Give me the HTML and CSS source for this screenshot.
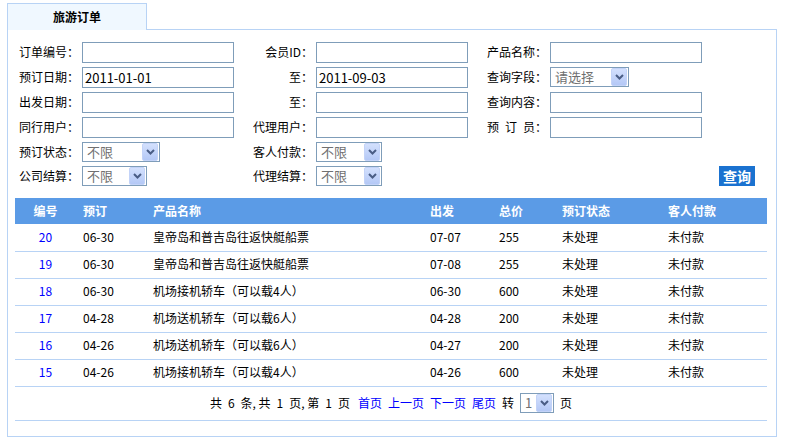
FILE: index.html
```html
<!DOCTYPE html>
<html lang="zh-CN">
<head>
<meta charset="utf-8">
<title>旅游订单</title>
<link rel="stylesheet" href="styles.css">
</head>
<body>
<div class="panel">
  <div class="tabs">
    <div class="tab">旅游订单</div>
    <div class="tab-fill"></div>
  </div>
  <div class="panel-body">
    <form class="search">
      <label class="lab lab1">订单编号：</label>
      <input class="inp" type="text">
      <label class="lab lab2">会员ID：</label>
      <input class="inp" type="text">
      <label class="lab lab3">产品名称：</label>
      <input class="inp" type="text">
      <span></span>

      <label class="lab lab1">预订日期：</label>
      <input class="inp" type="text" value="2011-01-01">
      <label class="lab lab2">至：</label>
      <input class="inp" type="text" value="2011-09-03">
      <label class="lab lab3">查询字段：</label>
      <div class="sel w79"><span class="sel-text">请选择</span><span class="sel-btn"><svg width="9" height="6" viewBox="0 0 9 6"><path d="M1 1 L4.5 4.5 L8 1" fill="none" stroke="#4a5d85" stroke-width="2"/></svg></span></div>
      <span></span>

      <label class="lab lab1">出发日期：</label>
      <input class="inp" type="text">
      <label class="lab lab2">至：</label>
      <input class="inp" type="text">
      <label class="lab lab3">查询内容：</label>
      <input class="inp" type="text">
      <span></span>

      <label class="lab lab1">同行用户：</label>
      <input class="inp" type="text">
      <label class="lab lab2">代理用户：</label>
      <input class="inp" type="text">
      <label class="lab lab3">预&ensp;订&ensp;员：</label>
      <input class="inp" type="text">
      <span></span>

      <label class="lab lab1">预订状态：</label>
      <div class="sel w78"><span class="sel-text">不限</span><span class="sel-btn"><svg width="9" height="6" viewBox="0 0 9 6"><path d="M1 1 L4.5 4.5 L8 1" fill="none" stroke="#4a5d85" stroke-width="2"/></svg></span></div>
      <label class="lab lab2">客人付款：</label>
      <div class="sel w66"><span class="sel-text">不限</span><span class="sel-btn"><svg width="9" height="6" viewBox="0 0 9 6"><path d="M1 1 L4.5 4.5 L8 1" fill="none" stroke="#4a5d85" stroke-width="2"/></svg></span></div>
      <span></span>
      <span></span>
      <span></span>

      <label class="lab lab1">公司结算：</label>
      <div class="sel w65"><span class="sel-text">不限</span><span class="sel-btn"><svg width="9" height="6" viewBox="0 0 9 6"><path d="M1 1 L4.5 4.5 L8 1" fill="none" stroke="#4a5d85" stroke-width="2"/></svg></span></div>
      <label class="lab lab2">代理结算：</label>
      <div class="sel w66"><span class="sel-text">不限</span><span class="sel-btn"><svg width="9" height="6" viewBox="0 0 9 6"><path d="M1 1 L4.5 4.5 L8 1" fill="none" stroke="#4a5d85" stroke-width="2"/></svg></span></div>
      <span></span>
      <span></span>
      <button class="btn-query" type="button">查询</button>
    </form>

    <table class="orders">
      <thead>
        <tr>
          <th class="c-id">编号</th>
          <th class="c-date">预订</th>
          <th class="c-name">产品名称</th>
          <th class="c-dep">出发</th>
          <th class="c-price">总价</th>
          <th class="c-state">预订状态</th>
          <th class="c-pay">客人付款</th>
        </tr>
      </thead>
      <tbody>
        <tr><td class="c-id"><a href="#">20</a></td><td>06-30</td><td>皇帝岛和普吉岛往返快艇船票</td><td>07-07</td><td>255</td><td>未处理</td><td>未付款</td></tr>
        <tr><td class="c-id"><a href="#">19</a></td><td>06-30</td><td>皇帝岛和普吉岛往返快艇船票</td><td>07-08</td><td>255</td><td>未处理</td><td>未付款</td></tr>
        <tr><td class="c-id"><a href="#">18</a></td><td>06-30</td><td>机场接机轿车（可以载4人）</td><td>06-30</td><td>600</td><td>未处理</td><td>未付款</td></tr>
        <tr><td class="c-id"><a href="#">17</a></td><td>04-28</td><td>机场送机轿车（可以载6人）</td><td>04-28</td><td>200</td><td>未处理</td><td>未付款</td></tr>
        <tr><td class="c-id"><a href="#">16</a></td><td>04-26</td><td>机场送机轿车（可以载6人）</td><td>04-27</td><td>200</td><td>未处理</td><td>未付款</td></tr>
        <tr><td class="c-id"><a href="#">15</a></td><td>04-26</td><td>机场接机轿车（可以载4人）</td><td>04-26</td><td>600</td><td>未处理</td><td>未付款</td></tr>
        <tr>
          <td class="pager" colspan="7">
            <div class="pager-inner">
              <span class="pager-info">共&ensp;6&ensp;条,&nbsp;共&ensp;1&ensp;页,&nbsp;第&ensp;1&ensp;页</span>
              <a href="#">首页</a>
              <a href="#">上一页</a>
              <a href="#">下一页</a>
              <a href="#">尾页</a>
              <span>转</span>
              <div class="sel w34"><span class="sel-text">1</span><span class="sel-btn"><svg width="9" height="6" viewBox="0 0 9 6"><path d="M1 1 L4.5 4.5 L8 1" fill="none" stroke="#4a5d85" stroke-width="2"/></svg></span></div>
              <span>页</span>
            </div>
          </td>
        </tr>
      </tbody>
    </table>
  </div>
</div>
</body>
</html>
```

FILE: styles.css
```css
body {
  margin: 0;
  background: #fff;
  color: #000;
  font-family: "Noto Sans CJK SC", sans-serif;
  font-size: 12px;
  line-height: 1.2;
}

.panel {
  margin: 3px 0 0 7px;
  width: 770px;
}

.tabs {
  display: flex;
  height: 27px;
}

.tab {
  box-sizing: border-box;
  width: 140px;
  height: 27px;
  border: 1px solid #b8d3f5;
  border-bottom: none;
  background: #f0f8ff;
  font-weight: bold;
  text-align: center;
  line-height: 26px;
}

.tab-fill {
  flex: 1;
  border-bottom: 1px solid #b8d3f5;
}

.panel-body {
  border: 1px solid #b8d3f5;
  border-top: none;
  padding: 12px 8px 15px 7px;
}

/* search form */
.search {
  display: grid;
  grid-template-columns: 67px 152px 82px 152px 82px 152px 1fr;
  grid-template-rows: 21px 21px 21px 21px 20px 20px;
  row-gap: 4px;
  margin: 0;
}

.lab {
  display: flex;
  align-items: center;
  white-space: nowrap;
}

.lab1 { padding-left: 4px; }
.lab2 { justify-content: flex-end; padding-right: 3px; }
.lab3 { padding-left: 19px; }

.inp {
  box-sizing: border-box;
  width: 152px;
  height: 21px;
  margin: 0;
  padding: 0 2px;
  border: 1px solid #7f9db9;
  font-family: "Noto Sans CJK SC", sans-serif;
  font-size: 13px;
  color: #000;
  background: #fff;
  outline: none;
}

.sel {
  box-sizing: border-box;
  display: inline-flex;
  height: 20px;
  border: 1px solid #7f9db9;
  background: #fff;
}

.sel-text {
  flex: 1;
  padding-left: 4px;
  color: #707070;
  font-size: 13px;
  line-height: 18px;
}

.sel-btn {
  box-sizing: border-box;
  width: 16px;
  margin: 0 1px 0 0;
  display: flex;
  align-items: center;
  justify-content: center;
  background: linear-gradient(#d3e0fd, #b4c8f6);
  border: 1px solid #c3d3f8;
  border-radius: 2px;
}

.w78 { width: 78px; }
.w79 { width: 79px; }
.w66 { width: 66px; }
.w65 { width: 65px; }
.w34 { width: 34px; }

.btn-query {
  justify-self: start;
  width: 36px;
  height: 20px;
  margin-left: 17px;
  padding: 0;
  border: none;
  background: #1a72d0;
  color: #fff;
  font-family: "Noto Sans CJK SC", sans-serif;
  font-size: 14px;
  font-weight: bold;
  line-height: 20px;
}

/* orders table */
.orders {
  width: 752px;
  margin-top: 12px;
  border-collapse: collapse;
  border-spacing: 0;
  table-layout: fixed;
}

.orders th,
.orders td {
  box-sizing: border-box;
}

.orders th {
  height: 26px;
  padding: 0 0 0 7px;
  background: #5b9be6;
  color: #fff;
  font-weight: bold;
  text-align: left;
}

.orders td {
  height: 27px;
  padding: 0 0 0 7px;
  border-bottom: 1px solid #b8d3f5;
  white-space: nowrap;
}

.orders .c-id {
  padding: 0;
  text-align: center;
}

.c-id { width: 61px; }
.c-date { width: 70px; }
.c-name { width: 277px; }
.c-dep { width: 69px; }
.c-price { width: 63px; }
.c-state { width: 106px; }
.c-pay { width: 106px; }

a {
  color: #0000ff;
  text-decoration: none;
}

.orders td.pager {
  height: 34px;
  padding: 0;
}

.pager-inner {
  display: flex;
  justify-content: center;
  align-items: center;
  gap: 6px;
}

.pager-info {
  margin-right: 2px;
  white-space: nowrap;
}
```
